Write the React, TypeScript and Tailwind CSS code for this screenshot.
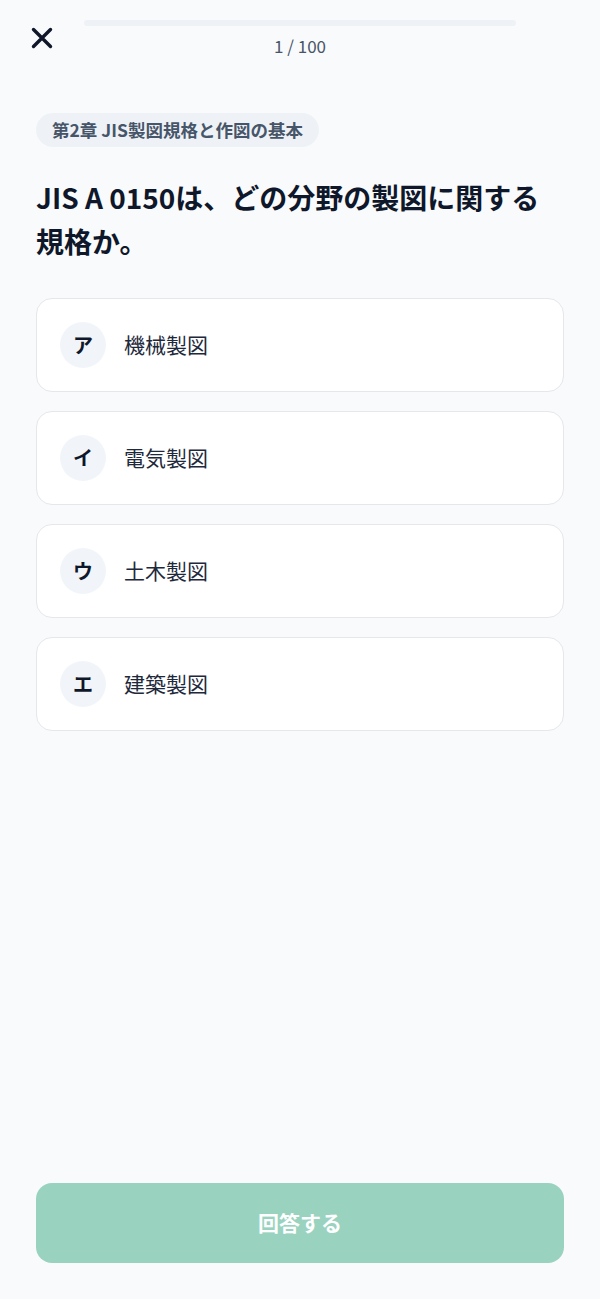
import { useState } from 'react'

const options = [
  { key: 'ア', label: '機械製図' },
  { key: 'イ', label: '電気製図' },
  { key: 'ウ', label: '土木製図' },
  { key: 'エ', label: '建築製図' },
]

export default function App() {
  const [selected, setSelected] = useState<string | null>(null)
  const current = 1
  const total = 100

  return (
    <div className="flex h-[1299px] flex-col bg-[#f9fafb] px-9 font-['Noto_Sans_CJK_JP','Noto_Sans',sans-serif] text-[#0f172a]">
      <header className="grid grid-cols-[48px_1fr_48px] pt-5">
        <button className="-ml-1.5 mt-[6px] h-6 w-6 text-[#0f172a]" aria-label="閉じる">
          <svg viewBox="0 0 24 24" width="24" height="24" fill="none" stroke="currentColor" strokeWidth="3.4" strokeLinecap="round">
            <path d="M3.5 3.5 20.5 20.5M20.5 3.5 3.5 20.5" />
          </svg>
        </button>
        <div className="flex flex-col items-center">
          <div className="h-[6px] w-full overflow-hidden rounded-full bg-[#eef2f6]">
            <div className="h-full rounded-full bg-[#99d3bf]" style={{ width: `${((current - 1) / total) * 100}%` }} />
          </div>
          <div className="mt-[10px] text-[17px] leading-5 text-[#475569]">{current} / {total}</div>
        </div>
        <div />
      </header>

      <div className="mt-[57px]">
        <span className="inline-block rounded-full bg-[#eef2f6] px-4 py-[5px] text-[17.5px] font-bold leading-6 text-[#475569]">
          第2章 JIS製図規格と作図の基本
        </span>
      </div>

      <h1 className="mt-[28px] text-[28px] font-bold leading-[44px] text-[#0f172a]">
        JIS A 0150は、どの分野の製図に関する規格か。
      </h1>

      <div className="mt-[35px] flex flex-col gap-[19px]">
        {options.map((o) => (
          <button
            key={o.key}
            onClick={() => setSelected(o.key)}
            className={`flex h-[94px] items-center gap-[18px] rounded-2xl border bg-white pl-[23px] text-left ${selected === o.key ? 'border-[#34a882]' : 'border-[#e5e7eb]'}`}
          >
            <span className="flex h-[46px] w-[46px] items-center justify-center rounded-full bg-[#f1f5f9] text-[20px] font-bold text-[#0f172a]">
              {o.key}
            </span>
            <span className="text-[21px] text-[#1e293b]">{o.label}</span>
          </button>
        ))}
      </div>

      <button
        disabled={!selected}
        className="mb-9 mt-auto flex h-[80px] w-full items-center justify-center rounded-2xl bg-[#99d3bf] text-[21px] font-bold text-white"
      >
        回答する
      </button>
    </div>
  )
}
